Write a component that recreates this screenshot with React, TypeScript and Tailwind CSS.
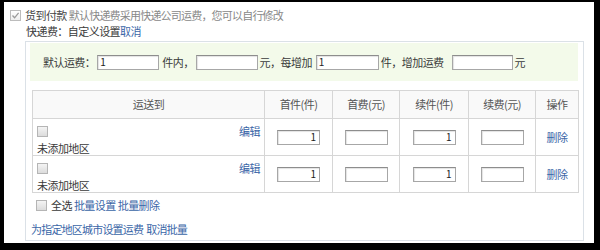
const font = { fontFamily: '"Noto Sans CJK SC", "Noto Sans", sans-serif' };

const Box = ({ checked = false, className = "" }: { checked?: boolean; className?: string }) => (
  <span
    className={`flex h-[11px] w-[11px] shrink-0 items-center justify-center border border-[#b5b5b5] bg-gradient-to-b from-[#f4f4f4] to-[#dcdcdc] ${className}`}
  >
    {checked && (
      <svg width="9" height="9" viewBox="0 0 9 9">
        <path d="M1.5 4.5 L3.6 6.8 L7.6 1.8" fill="none" stroke="#9a9a9a" strokeWidth="1.3" />
      </svg>
    )}
  </span>
);

const Field = ({ value = "", className = "" }: { value?: string; className?: string }) => (
  <span
    className={`flex h-[15px] items-center border border-[#a7a7a7] border-t-[#8d8d8d] bg-white text-[10px] leading-none tracking-normal text-[#222] shadow-[inset_1px_1px_1px_#e3e3e3] ${className}`}
  >
    {value}
  </span>
);

const rows = [1, 2];

export default function App() {
  return (
    <div className="box-border h-[250px] w-[600px] bg-black pb-[7px] pl-[4px] pr-[6px] pt-[2px]" style={font}>
      <div className="h-full bg-white pl-[6px] pt-[5px] text-[11px] tracking-[-0.55px] text-[#3a3a3a]">
        <div className="flex h-[16px] items-center leading-[16px]">
          <Box checked className="h-[10px] w-[10px] border-[#bcbcbc] from-white to-[#eee]" />
          <span className="ml-[4px] text-[#444]">货到付款</span>
          <span className="ml-[2px] tracking-[-0.8px] text-[#888]">默认快递费采用快递公司运费，您可以自行修改</span>
        </div>
        <div className="ml-[16px] flex h-[16px] items-center leading-[16px]">
          <span>快递费：自定义设置</span>
          <span className="text-[#3a66a7]">取消</span>
        </div>

        <div className="ml-[15px] mt-[2px] box-border h-[200px] w-[559px] border border-[#dbe1e7] pl-[4px] pr-[5px] pt-[1px]">
          <div className="flex h-[38px] items-center bg-[#f3faea] pl-[13px] leading-[15px]">
            <span>默认运费：</span>
            <Field value="1" className="ml-[2px] w-[62px] pl-[2px]" />
            <span className="ml-[3px]">件内，</span>
            <Field className="ml-[2px] w-[62px]" />
            <span className="ml-[2px]">元，每增加</span>
            <Field value="1" className="ml-[4px] w-[63px] pl-[2px]" />
            <span className="ml-[2px]">件，增加运费</span>
            <Field className="ml-[8px] w-[61px]" />
            <span className="ml-[2px]">元</span>
          </div>

          <table className="ml-[2px] mt-[9px] w-[546px] table-fixed border-collapse text-[11px]">
            <colgroup>
              <col className="w-[232px]" />
              <col className="w-[68px]" />
              <col className="w-[67px]" />
              <col className="w-[69px]" />
              <col className="w-[67px]" />
              <col className="w-[43px]" />
            </colgroup>
            <thead>
              <tr className="h-[28px] bg-[#f9f9f9] text-[#555]">
                {["运送到", "首件(件)", "首费(元)", "续件(件)", "续费(元)", "操作"].map((h) => (
                  <th key={h} className="border border-[#d6d6d6] p-0 text-center font-normal">
                    {h}
                  </th>
                ))}
              </tr>
            </thead>
            <tbody>
              {rows.map((r) => (
                <tr key={r} className="h-[37px]">
                  <td className="border border-[#d6d6d6] p-0 align-top">
                    <div className="flex justify-between pl-[4px] pr-[4px] pt-[7px]">
                      <div className="flex flex-col">
                        <Box />
                        <span className="mt-[4px] leading-[14px]">未添加地区</span>
                      </div>
                      <span className="mt-[-2px] leading-[14px] text-[#3a66a7]">编辑</span>
                    </div>
                  </td>
                  <td className="border border-[#d6d6d6] p-0">
                    <div className="flex justify-center">
                      <Field value="1" className="w-[43px] justify-end pr-[3px]" />
                    </div>
                  </td>
                  <td className="border border-[#d6d6d6] p-0">
                    <div className="flex justify-center">
                      <Field className="w-[43px]" />
                    </div>
                  </td>
                  <td className="border border-[#d6d6d6] p-0">
                    <div className="flex justify-center">
                      <Field value="1" className="w-[43px] justify-end pr-[3px]" />
                    </div>
                  </td>
                  <td className="border border-[#d6d6d6] p-0">
                    <div className="flex justify-center">
                      <Field className="w-[43px]" />
                    </div>
                  </td>
                  <td className="border border-[#d6d6d6] p-0 text-center text-[#3a66a7]">删除</td>
                </tr>
              ))}
            </tbody>
          </table>

          <div className="ml-[6px] mt-[4px] flex h-[16px] items-center leading-[16px]">
            <Box className="h-[10px] w-[10px]" />
            <span className="ml-[4px]">全选</span>
            <span className="ml-[2px] text-[#3a66a7]">批量设置</span>
            <span className="ml-[2px] text-[#3a66a7]">批量删除</span>
          </div>
          <div className="ml-[1px] mt-[8px] flex h-[16px] items-center leading-[16px] tracking-[-0.8px] text-[#3a66a7]">
            <span>为指定地区城市设置运费</span>
            <span className="ml-[3px]">取消批量</span>
          </div>
        </div>
      </div>
    </div>
  );
}
